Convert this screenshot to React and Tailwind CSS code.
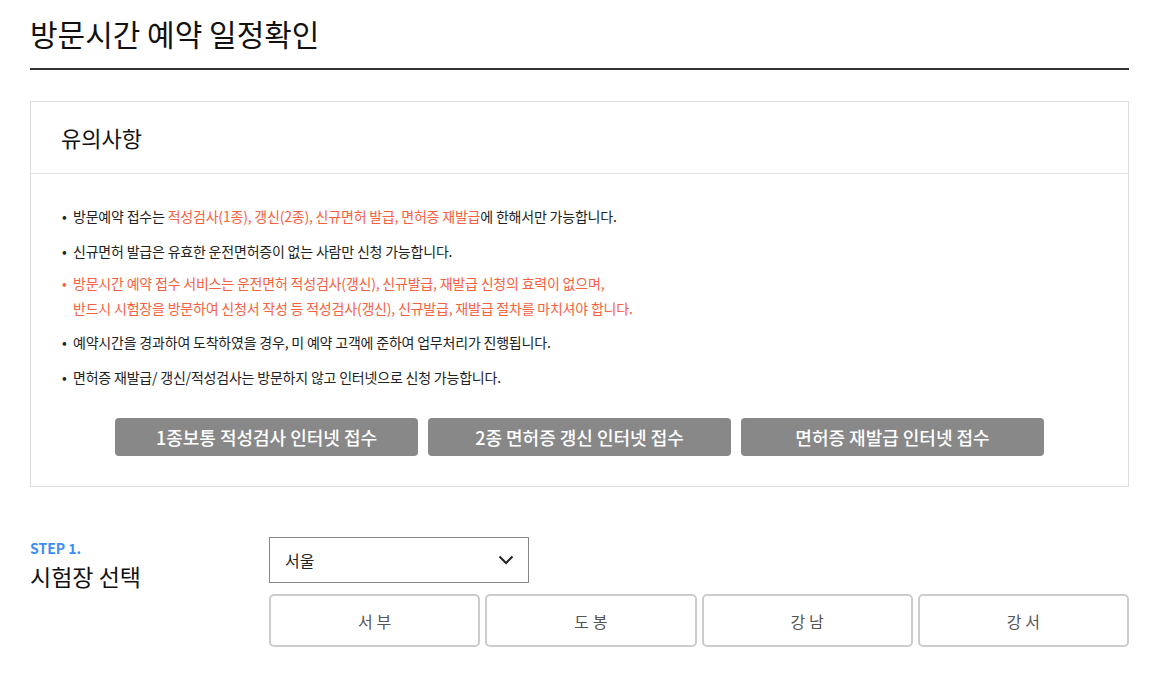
import React, { useState } from 'react';

const notices = [
  {
    parts: [
      { t: '방문예약 접수는 ' },
      { t: '적성검사(1종), 갱신(2종), 신규면허 발급, 면허증 재발급', hl: true },
      { t: '에 한해서만 가능합니다.' },
    ],
  },
  { parts: [{ t: '신규면허 발급은 유효한 운전면허증이 없는 사람만 신청 가능합니다.' }] },
  {
    warn: true,
    lines: [
      '방문시간 예약 접수 서비스는 운전면허 적성검사(갱신), 신규발급, 재발급 신청의 효력이 없으며,',
      '반드시 시험장을 방문하여 신청서 작성 등 적성검사(갱신), 신규발급, 재발급 절차를 마치셔야 합니다.',
    ],
  },
  { parts: [{ t: '예약시간을 경과하여 도착하였을 경우, 미 예약 고객에 준하여 업무처리가 진행됩니다.' }] },
  { parts: [{ t: '면허증 재발급/ 갱신/적성검사는 방문하지 않고 인터넷으로 신청 가능합니다.' }] },
];

const links = ['1종보통 적성검사 인터넷 접수', '2종 면허증 갱신 인터넷 접수', '면허증 재발급 인터넷 접수'];
const branches = ['서 부', '도 봉', '강 남', '강 서'];

const App = () => {
  const [region, setRegion] = useState('서울');

  return (
    <div
      className="w-[1161px] min-h-[682px] bg-white px-[30px] pt-[14px] text-[#222]"
      style={{ fontFamily: '"Noto Sans CJK KR", "Noto Sans", sans-serif' }}
    >
      <h1 className="text-[30px] leading-[38px] font-normal text-[#111] pb-[16px] border-b-2 border-[#333] w-[1099px]">
        방문시간 예약 일정확인
      </h1>

      <div className="mt-[31px] w-[1099px] border border-[#ddd]">
        <div className="h-[72px] px-[30px] flex items-center border-b border-[#e2e2e2]">
          <h2 className="text-[22px] text-[#111]">유의사항</h2>
        </div>

        <div className="px-[30px] pt-[33px] pb-[30px]">
          <ul className="flex flex-col gap-[17px] text-[14px] leading-[18px] tracking-[-0.2px]">
            {notices.map((n, i) =>
              n.warn ? (
                <li key={i} className="flex text-[#f7613f] -mt-[3px] -mb-[1px]">
                  <span className="w-[12px] shrink-0 pl-[1px]">•</span>
                  <div className="flex flex-col gap-[7px]">
                    {n.lines.map((l) => (
                      <span key={l}>{l}</span>
                    ))}
                  </div>
                </li>
              ) : (
                <li key={i} className="flex text-[#222]">
                  <span className="w-[12px] shrink-0 pl-[1px]">•</span>
                  <span>
                    {n.parts.map((p, j) => (
                      <span key={j} className={p.hl ? 'text-[#f7613f]' : ''}>
                        {p.t}
                      </span>
                    ))}
                  </span>
                </li>
              )
            )}
          </ul>

          <div className="mt-[32px] flex justify-center gap-[10px]">
            {links.map((l) => (
              <button
                key={l}
                className="w-[303px] h-[38px] rounded-[4px] bg-[#888] text-white text-[18px] font-medium"
              >
                {l}
              </button>
            ))}
          </div>
        </div>
      </div>

      <div className="mt-[50px] flex w-[1099px]">
        <div className="w-[239px] shrink-0">
          <p className="text-[14px] leading-[18px] font-bold text-[#3a8ef6] mt-[2px]">STEP 1.</p>
          <p className="text-[23px] leading-[30px] text-[#111] mt-[4px]">시험장 선택</p>
        </div>

        <div className="flex-1 flex flex-col gap-[11px]">
          <div className="w-[260px] h-[46px] border border-[#888] flex items-center justify-between pl-[15px] pr-[14px]">
            <span className="text-[16px] text-[#222]">{region}</span>
            <svg width="16" height="10" viewBox="0 0 16 10" fill="none">
              <path d="M1.5 1.5 L8 8 L14.5 1.5" stroke="#222" strokeWidth="2" />
            </svg>
          </div>

          <div className="grid grid-cols-4 gap-[5px]">
            {branches.map((b) => (
              <button
                key={b}
                onClick={() => setRegion('서울')}
                className="h-[53px] rounded-[5px] border-2 border-[#ccc] bg-white text-[16px] text-[#555]"
              >
                {b}
              </button>
            ))}
          </div>
        </div>
      </div>
    </div>
  );
};

export default App;
